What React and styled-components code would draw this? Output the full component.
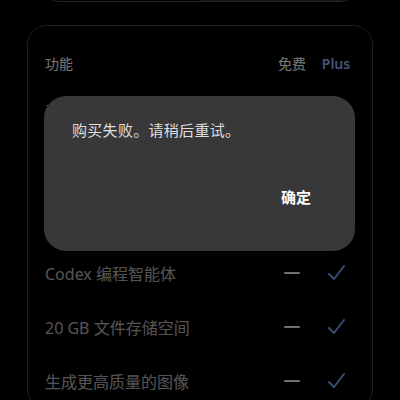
import styled, { createGlobalStyle } from "styled-components";

const GlobalStyle = createGlobalStyle`
  html, body {
    margin: 0;
    background: #000;
    overflow: hidden;
  }
  body {
    font-family: "Noto Sans", "Noto Sans CJK SC", sans-serif;
  }
`;

const Page = styled.div`
  padding: 0 27px;
  height: 400px;
  overflow: hidden;
`;

const Toggle = styled.div`
  margin: -38px 13px 0;
  height: 38px;
  border: 1px solid #4a4a4a;
  border-radius: 20px;
  display: grid;
  grid-template-columns: 1fr 1fr;
  overflow: hidden;
`;

const ToggleHalf = styled.div`
  background: ${(p) => (p.$active ? "#2c2c2c" : "transparent")};
`;

const Card = styled.div`
  margin-top: 23px;
  border: 1px solid #3e3e3e;
  border-radius: 20px;
  padding: 16px 14px 0 17px;
`;

const Row = styled.div`
  display: grid;
  grid-template-columns: 1fr 44px 44px;
  align-items: center;
  height: ${(p) => (p.$head ? "42px" : "54px")};
`;

const Label = styled.div`
  font-size: ${(p) => (p.$head ? "14px" : "16px")};
  color: ${(p) => (p.$head ? "#eeeeee" : "#ffffff")};
  opacity: ${(p) => (p.$head ? 1 : 0.66)};
  white-space: nowrap;
`;

const Col = styled.div`
  display: flex;
  justify-content: center;
  font-size: 14px;
  font-weight: ${(p) => (p.$plus ? 600 : 400)};
  color: ${(p) => (p.$plus ? "#8aa8e8" : "#eeeeee")};
`;

const Dash = styled.div`
  width: 16px;
  height: 2px;
  border-radius: 1px;
  background: #e0e0e0;
`;

const Overlay = styled.div`
  position: fixed;
  inset: 0;
  background: rgba(0, 0, 0, 0.5);
`;

const Dialog = styled.div`
  position: fixed;
  left: 44px;
  top: 96px;
  width: 311px;
  height: 155px;
  box-sizing: border-box;
  background: #383838;
  border-radius: 22px;
  padding: 23px 44px 0 28px;
  display: flex;
  flex-direction: column;
  gap: 45px;
`;

const Message = styled.div`
  font-size: 15px;
  color: #dedede;
  line-height: 22px;
  letter-spacing: 0.3px;
`;

const Confirm = styled.button`
  align-self: flex-end;
  background: none;
  border: none;
  padding: 0;
  font-family: inherit;
  font-size: 15px;
  font-weight: 700;
  color: #ffffff;
  line-height: 22px;
`;

const Check = () => (
  <svg width="20" height="20" viewBox="0 0 20 20" fill="none">
    <path
      d="M3 11 L8 16 L18 3"
      stroke="#6f9ae8"
      strokeWidth="2"
      strokeLinecap="round"
      strokeLinejoin="round"
    />
  </svg>
);

const features = [
  "更多消息和上传",
  "更快的图像生成",
  "更多记忆和上下文",
  "Codex 编程智能体",
  "20 GB 文件存储空间",
  "生成更高质量的图像",
];

export default function App() {
  return (
    <>
      <GlobalStyle />
      <Page>
        <Toggle>
          <ToggleHalf />
          <ToggleHalf $active />
        </Toggle>
        <Card>
          <Row $head>
            <Label $head>功能</Label>
            <Col>免费</Col>
            <Col $plus>Plus</Col>
          </Row>
          {features.map((f) => (
            <Row key={f}>
              <Label>{f}</Label>
              <Col>
                <Dash />
              </Col>
              <Col>
                <Check />
              </Col>
            </Row>
          ))}
        </Card>
      </Page>
      <Overlay />
      <Dialog>
        <Message>购买失败。请稍后重试。</Message>
        <Confirm>确定</Confirm>
      </Dialog>
    </>
  );
}
